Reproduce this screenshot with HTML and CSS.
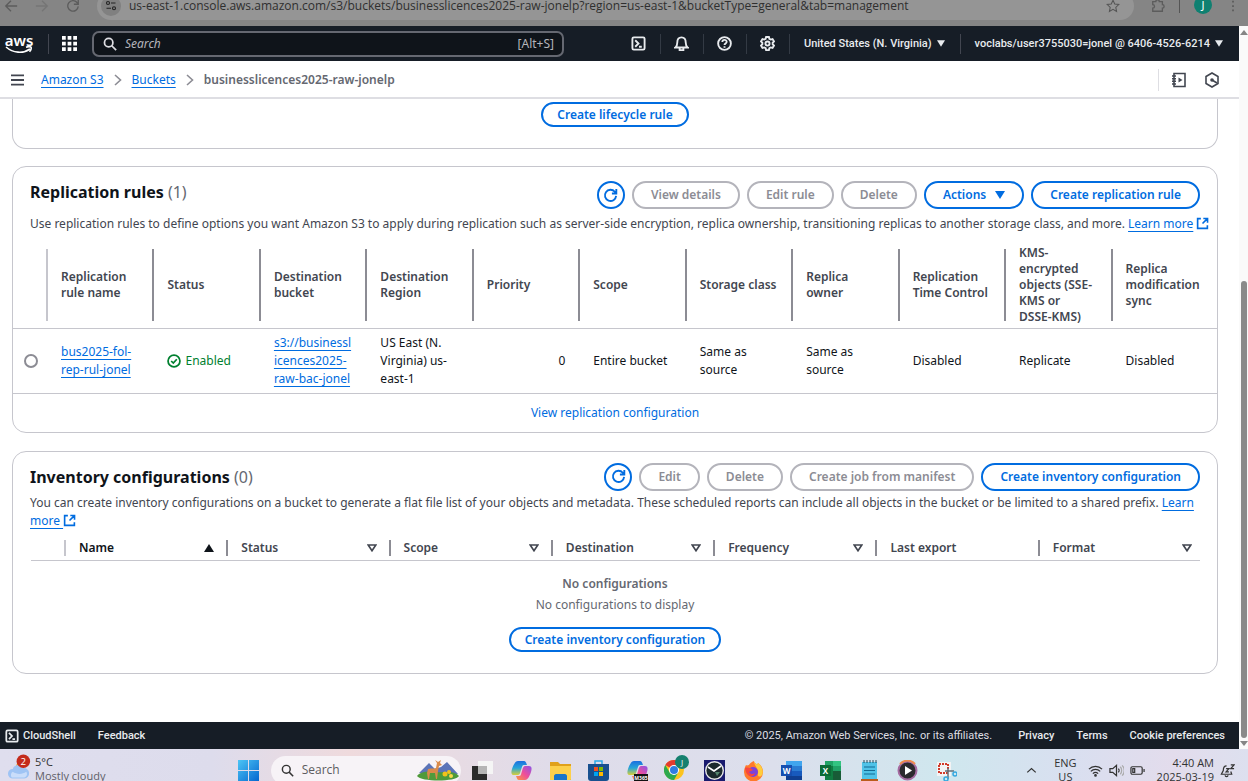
FILE: index.html
```html
<!DOCTYPE html>
<html lang="en">
<head>
<meta charset="utf-8">
<title>businesslicences2025-raw-jonelp - S3 bucket</title>
<link rel="stylesheet" href="styles.css">
</head>
<body>
<svg class="sprite" aria-hidden="true">
  <symbol id="i-shell" viewBox="0 0 16 16"><rect x="1.500" y="1.500" width="13" height="13" rx="1.500"/><path d="M4.500 4.500 8 8l-3.500 3.500M8.500 11.500h3"/></symbol>
  <symbol id="i-search" viewBox="0 0 16 16"><circle cx="6.500" cy="6.500" r="4.800"/><path d="m10 10 5 5"/></symbol>
  <symbol id="i-refresh" viewBox="0 0 16 16"><path d="M14 8.500A6 6 0 1 1 12.600 4L14 5.500M14.200 1v4.800H9.500"/></symbol>
  <symbol id="i-external" viewBox="0 0 16 16"><path d="M6 2H2v12h12v-4M9 1.800h5.200V7M14 2 8 8"/></symbol>
  <symbol id="i-down" viewBox="0 0 10 8"><path d="M0 0h10L5 8z"/></symbol>
  <symbol id="i-sort" viewBox="0 0 10 8"><path d="M1.200 1h7.600L5 6.800z"/></symbol>
  <symbol id="i-chev" viewBox="0 0 8 12"><path d="m1 1 5.500 5L1 11"/></symbol>
</svg>

<header class="browser">
  <button class="bbtn" aria-label="Back"><svg viewBox="0 0 16 16"><path d="M15 8H2m6-6L2 8l6 6"/></svg></button>
  <button class="bbtn dim" aria-label="Forward"><svg viewBox="0 0 16 16"><path d="M1 8h13M8 2l6 6-6 6"/></svg></button>
  <button class="bbtn" aria-label="Reload"><svg viewBox="0 0 16 16"><path d="M14 8.500A6 6 0 1 1 12.600 4L14 5.500M14 1v5H9"/></svg></button>
  <div class="omnibox">
    <span class="site"><svg viewBox="0 0 16 16"><circle cx="4" cy="4" r="2"/><path d="M8 4h6M2 11h6"/><circle cx="12" cy="11" r="2"/></svg></span>
    <span class="url">us-east-1.console.aws.amazon.com/s3/buckets/businesslicences2025-raw-jonelp?region=us-east-1&amp;bucketType=general&amp;tab=management</span>
    <svg class="star" viewBox="0 0 16 16"><path d="m8 1.500 2 4.300 4.600.5-3.400 3.200.9 4.700L8 11.800l-4.100 2.400.9-4.700L1.400 6.300 6 5.800z"/></svg>
  </div>
  <button class="bbtn ext" aria-label="Extensions"><svg viewBox="0 0 16 16"><path d="M2 3h3.500a2 2 0 0 1 4 0H13v3.500a2 2 0 0 1 0 4V14H2v-3.500a2 2 0 0 0 0-4z"/></svg></button>
  <span class="bsep"></span>
  <span class="avatar">J</span>
  <button class="bbtn dots" aria-label="Menu"><svg viewBox="0 0 16 16"><path d="M8 2v2M8 7v2M8 12v2"/></svg></button>
</header>

<div class="viewport">
  <div class="console">
    <nav class="topnav">
      <a class="logo" href="#" aria-label="aws"><b>aws</b><svg viewBox="0 0 28 8"><path d="M1 1c7 6 17 7 24 2"/><path d="M21 1.200c2-.7 4-.8 5 0 .5 1-.2 3-1.500 4.500"/></svg></a>
      <span class="tsep"></span>
      <button class="tbtn grid" aria-label="Services"><svg viewBox="0 0 16 16"><path d="M0 0h4v4H0zM6 0h4v4H6zM12 0h4v4h-4zM0 6h4v4H0zM6 6h4v4H6zM12 6h4v4h-4zM0 12h4v4H0zM6 12h4v4H6zM12 12h4v4h-4z"/></svg></button>
      <label class="search"><svg class="ln"><use href="#i-search"/></svg><input type="text" placeholder="Search" aria-label="Search"><span>[Alt+S]</span></label>
      <div class="tools">
        <button class="tbtn" aria-label="CloudShell"><svg class="ln"><use href="#i-shell"/></svg></button>
        <button class="tbtn" aria-label="Notifications"><svg class="ln" viewBox="0 0 16 16"><path d="M1.500 12.200c2-1.500 2-3 2-5.200 0-3.500 2-5.500 4.500-5.500s4.500 2 4.500 5.500c0 2.200 0 3.700 2 5.200zM6 13v2h4v-2"/></svg></button>
        <button class="tbtn" aria-label="Help"><svg class="ln" viewBox="0 0 16 16"><circle cx="8" cy="8" r="6.800"/><path d="M5.700 6.500C5.700 3.300 10.300 3.500 10.300 6.200 10.300 8 8 7.800 8 9.600M8 11v1.500"/></svg></button>
        <button class="tbtn" aria-label="Settings"><svg class="ln" viewBox="0 0 16 16"><circle cx="8" cy="8" r="2.200"/><path d="M6.500 1h3l.5 2 1.400.8 2-.6L15 5.800 13.500 7.200v1.600L15 10.200l-1.600 2.600-2-.6L10 13l-.5 2h-3L6 13l-1.400-.8-2 .6L1 10.200l1.500-1.400V7.200L1 5.800l1.600-2.600 2 .6L6 3z"/></svg></button>
        <button class="tmenu">United States (N. Virginia) <svg><use href="#i-down"/></svg></button>
        <button class="tmenu">voclabs/user3755030=jonel @ 6406-4526-6214 <svg><use href="#i-down"/></svg></button>
      </div>
    </nav>

    <nav class="crumbs">
      <button class="ibtn" aria-label="Open navigation"><svg viewBox="0 0 14 12"><path d="M0 1h14M0 6h14M0 11h14"/></svg></button>
      <a href="#">Amazon S3</a><svg class="chev"><use href="#i-chev"/></svg>
      <a href="#">Buckets</a><svg class="chev"><use href="#i-chev"/></svg>
      <b>businesslicences2025-raw-jonelp</b>
      <div class="panels">
        <button class="ibtn" aria-label="Tutorials"><svg viewBox="0 0 16 16"><path d="M3 1.500h11v13H3zM1 4h4M1 6.700h4M1 9.300h4M1 12h4"/><path class="fill" d="m7.500 5.500 4 2.500-4 2.500z"/></svg></button>
        <button class="ibtn" aria-label="Diagnostics"><svg viewBox="0 0 16 16"><path d="m8 1 6 3.500v7L8 15l-6-3.500v-7z"/><circle class="fill" cx="8" cy="8" r="1.800"/><path d="m8 8 5 3"/></svg></button>
      </div>
    </nav>

    <main>
      <section class="card lifecycle"><button class="btn small">Create lifecycle rule</button></section>

      <section class="card">
        <div class="head">
          <h2>Replication rules <span>(1)</span></h2>
          <div class="actions">
            <button class="btn round" aria-label="Refresh"><svg><use href="#i-refresh"/></svg></button>
            <button class="btn" disabled>View details</button>
            <button class="btn" disabled>Edit rule</button>
            <button class="btn" disabled>Delete</button>
            <button class="btn">Actions <svg><use href="#i-down"/></svg></button>
            <button class="btn">Create replication rule</button>
          </div>
        </div>
        <p class="desc line">Use replication rules to define options you want Amazon S3 to apply during replication such as server-side encryption, replica ownership, transitioning replicas to another storage class, and more. <a href="#">Learn more</a> <svg class="out"><use href="#i-external"/></svg></p>
        <table class="rules">
          <thead><tr>
            <th class="pick"></th><th>Replication rule name</th><th>Status</th><th>Destination bucket</th><th>Destination Region</th><th>Priority</th><th>Scope</th><th>Storage class</th><th>Replica<br>owner</th><th>Replication Time Control</th><th>KMS-<br>encrypted<br>objects (SSE-<br>KMS or<br>DSSE-KMS)</th><th>Replica modification sync</th>
          </tr></thead>
          <tbody><tr>
            <td class="pick"><input type="radio" name="rule" aria-label="Select bus2025-fol-rep-rul-jonel"></td>
            <td><a href="#">bus2025-fol-<br>rep-rul-jonel</a></td>
            <td class="ok"><svg viewBox="0 0 16 16"><circle cx="8" cy="8" r="6.800"/><path d="m4.800 8 2.400 2.400 4-4.400"/></svg>Enabled</td>
            <td><a href="#">s3://businessl<br>icences2025-<br>raw-bac-jonel</a></td>
            <td>US East (N.<br>Virginia) us-<br>east-1</td>
            <td class="num">0</td><td>Entire bucket</td><td>Same as<br>source</td><td>Same as<br>source</td><td>Disabled</td><td>Replicate</td><td>Disabled</td>
          </tr></tbody>
        </table>
        <div class="more"><a href="#">View replication configuration</a></div>
      </section>

      <section class="card inv">
        <div class="head">
          <h2>Inventory configurations <span>(0)</span></h2>
          <div class="actions">
            <button class="btn round" aria-label="Refresh"><svg><use href="#i-refresh"/></svg></button>
            <button class="btn" disabled>Edit</button>
            <button class="btn" disabled>Delete</button>
            <button class="btn" disabled>Create job from manifest</button>
            <button class="btn">Create inventory configuration</button>
          </div>
        </div>
        <p class="desc">You can create inventory configurations on a bucket to generate a flat file list of your objects and metadata. These scheduled reports can include all objects in the bucket or be limited to a shared prefix. <a href="#">Learn<br>more </a><svg class="out"><use href="#i-external"/></svg></p>
        <div class="inset">
        <table class="configs">
          <thead><tr>
            <th class="pick"></th>
            <th class="on"><div>Name<svg class="up" viewBox="0 0 10 8"><path d="M0 8h10L5 0z"/></svg></div></th>
            <th><div>Status<svg><use href="#i-sort"/></svg></div></th>
            <th><div>Scope<svg><use href="#i-sort"/></svg></div></th>
            <th><div>Destination<svg><use href="#i-sort"/></svg></div></th>
            <th><div>Frequency<svg><use href="#i-sort"/></svg></div></th>
            <th><div>Last export</div></th>
            <th><div>Format<svg><use href="#i-sort"/></svg></div></th>
          </tr></thead>
        </table>
        </div>
        <div class="empty"><b>No configurations</b><span>No configurations to display</span><button class="btn small">Create inventory configuration</button></div>
      </section>
    </main>

    <footer class="foot">
      <a class="cs" href="#"><svg class="ln"><use href="#i-shell"/></svg>CloudShell</a>
      <a href="#">Feedback</a>
      <span class="copy">© 2025, Amazon Web Services, Inc. or its affiliates.</span>
      <a href="#">Privacy</a><a href="#">Terms</a><a href="#">Cookie preferences</a>
    </footer>
  </div>
  <div class="scroll"><svg viewBox="0 0 10 6"><path d="m5 0 5 6H0z"/></svg><div class="track"><div class="thumb"></div></div><svg viewBox="0 0 10 6"><path d="m5 6 5-6H0z"/></svg></div>
</div>

<div class="taskbar">
  <div class="weather">
    <svg viewBox="0 0 26 28"><path d="M11 6c0 5 3 8 7 8-1 5-9 8-13 3 3 0 6-6 6-11z" fill="#f6a21d"/><path d="M6 26a5 5 0 0 1 0-10 6 6 0 0 1 11-1 5 5 0 0 1 1 11z" fill="#9fc4f4"/><path d="M5 25a4 4 0 0 1 1-6c4 3 10 3 14 0 2 3 0 6-3 6z" fill="#c9ddfa"/><circle cx="17" cy="8" r="7" fill="#c42b1c"/><text x="17" y="12" text-anchor="middle">2</text></svg>
    <div><span>5°C</span><span class="sub">Mostly cloudy</span></div>
  </div>
  <div class="apps">
    <svg class="app win" viewBox="0 0 21 21"><defs><linearGradient id="gw" x1="0" y1="0" x2="1" y2="1"><stop stop-color="#4cc5f5"/><stop offset="1" stop-color="#0667cf"/></linearGradient></defs><path fill="url(#gw)" d="M0 0h10v10H0zM11 0h10v10H11zM0 11h10v10H0zM11 11h10v10H11z"/></svg>
    <div class="tsearch"><svg class="ln"><use href="#i-search"/></svg><input type="text" placeholder="Search" aria-label="Search Windows">
      <svg class="deer" viewBox="0 0 42 22"><path d="M2 14 12 4l6 6 6-2 6-5 11 12z" fill="#5b74b8"/><path d="M0 17c4-5 12-5 20-4s16-2 22 4c-3 6-38 6-42 0z" fill="#4f9a3b"/><path d="M11 10c4-1 6 0 8-1l1-5-2-3 3 2 3-2-1 3 2 2-3 1-1 5-1 8h-1l-1-6h-5l-1 6h-1l-1-6z" fill="#d98a4a"/><circle cx="28" cy="15" r="2.500" fill="#f4c21c"/><circle cx="32" cy="13" r="2" fill="#f4c21c"/><circle cx="34" cy="17" r="2" fill="#f8d849"/></svg></div>
    <svg class="app" viewBox="0 0 21 21"><path d="M0 6h15v14H0z" fill="#2b2b2b"/><path d="M6 1h15v13H6z" fill="#f5f5f5"/><path d="M6 6h9v8H6z" fill="#b5b5b5"/></svg>
    <svg class="app" viewBox="0 0 21 21"><defs><linearGradient id="gc" x1="0" y1="0" x2="0" y2="1"><stop stop-color="#1b6fe0"/><stop offset=".5" stop-color="#27a5d8"/><stop offset="1" stop-color="#d8cf38"/></linearGradient><linearGradient id="gp" x1="1" y1="0" x2="0" y2="1"><stop stop-color="#8a55e8"/><stop offset=".5" stop-color="#ee4d9b"/><stop offset="1" stop-color="#fb9a3d"/></linearGradient></defs><path id="cop1" d="M7 1h6c2 0 2 2 3 4h-3c-2 0-2 2-3 5s-1 5-4 5H3c-3 0-3-3-2-6s3-8 6-8z" fill="url(#gc)"/><path id="cop2" d="M14 20H8c-2 0-2-2-3-4h3c2 0 2-2 3-5s1-5 4-5h3c3 0 3 3 2 6s-3 8-6 8z" fill="url(#gp)"/></svg>
    <svg class="app" viewBox="0 0 21 21"><path d="M0 2h8l2 2h11v16H0z" fill="#e0a11b"/><path d="M0 6h21v13a1 1 0 0 1-1 1H0z" fill="#fcd04b"/><path d="M4 20v-4c0-1 1-2 2-2h9c1 0 2 1 2 2v4z" fill="#1875c9"/></svg>
    <svg class="app" viewBox="0 0 21 21"><path d="M7 5V1h7v4" fill="none" stroke="#2ba8e8" stroke-width="1.500"/><path d="M0 4h21v14a3 3 0 0 1-3 3H3a3 3 0 0 1-3-3z" fill="#18508f"/><path fill="#f25022" d="M6 7h4v4H6z"/><path fill="#7fba00" d="M11 7h4v4h-4z"/><path fill="#00a4ef" d="M6 12h4v4H6z"/><path fill="#ffb900" d="M11 12h4v4h-4z"/></svg>
    <svg class="app" viewBox="0 0 21 21"><use href="#cop1"/><use href="#cop2"/><path d="M7 14h14v7H7z" fill="#111"/><text class="m" x="14" y="20" text-anchor="middle">M365</text></svg>
    <svg class="app chrome" viewBox="0 0 26 26"><circle cx="10" cy="15" r="10" fill="#fcc31e"/><path d="M10 15 1.300 10A10 10 0 0 1 18.700 10H10z" fill="#e33b2e"/><path d="M1.300 10A10 10 0 0 0 10 25l4.300-7.500L5.700 17.500z" fill="#2da94f"/><circle cx="10" cy="15" r="5" fill="#fff"/><circle cx="10" cy="15" r="4" fill="#2f7de1"/><circle cx="18" cy="7" r="7" fill="#15806f"/><text class="j" x="18" y="10" text-anchor="middle">J</text></svg>
    <svg class="app" viewBox="0 0 21 21"><path d="M0 0h21v21H0z" fill="#191b6e"/><circle cx="10.500" cy="10.500" r="8.800" fill="#1b2a2c" stroke="#e8e8e8" stroke-width="1.400"/><path d="m4 7 6 4 7-5" fill="none" stroke="#fff" stroke-width="1.600"/><path d="M11 12h5l-3 4z" fill="#53836c"/></svg>
    <svg class="app" viewBox="0 0 21 21"><path d="M3 5c1 1 2 0 3 0 1-2 3-3 5-4 0 2 2 2 3 4l1-2c3 2 5 5 5 9a9.500 9.500 0 0 1-19 0c0-3 1-5 2-7z" fill="#ff7a2b"/><path d="M11 1c0 2 2 2 3 4l1-2c4 3 6 8 4 12-2 3-5 1-4-2 1-4-4-7-4-12z" fill="#ffcd3c"/><circle cx="10" cy="12" r="5" fill="#7b43d9"/><path d="M2 8c3-1 6 0 8 2l-4 2c1 2 4 3 6 1-1 5-9 5-10-5z" fill="#f6463f"/></svg>
    <svg class="app" viewBox="0 0 21 21"><path d="M5 1h16v5H5z" fill="#41a5ee"/><path d="M5 6h16v5H5z" fill="#2b7cd3"/><path d="M5 11h16v5H5z" fill="#185abd"/><path d="M5 16h16v4H5z" fill="#103f91"/><path d="M0 5h11v11H0z" fill="#164fb0"/><text x="5.500" y="14" text-anchor="middle">W</text></svg>
    <svg class="app" viewBox="0 0 21 21"><path d="M5 1h8v5H5z" fill="#21a366"/><path d="M13 1h8v5h-8z" fill="#33c481"/><path d="M5 6h8v14H5z" fill="#107c41"/><path d="M13 6h8v5h-8z" fill="#21a366"/><path d="M13 11h8v9h-8z" fill="#185c37"/><path d="M0 5h11v11H0z" fill="#0b6b36"/><text x="5.500" y="14" text-anchor="middle">X</text></svg>
    <svg class="app" viewBox="0 0 21 21"><path d="M3 2h15v17H3z" fill="#4fc3e8"/><path d="M2 19h17v2H2z" fill="#bb5c1d"/><path d="M5 7h11M5 10.500h11M5 14h11" stroke="#136b93" stroke-width="1.200"/><path d="M5 0v3M8 0v3M11 0v3M14 0v3M17 0v3" stroke="#294c5c"/></svg>
    <svg class="app" viewBox="0 0 21 21"><circle cx="10.500" cy="10.500" r="9" fill="#2c2a2e" stroke="#a56ba1" stroke-width="2"/><path d="M3 4a10 10 0 0 1 15 0" fill="none" stroke="#ef8b4d" stroke-width="2"/><path d="m8 6 7 4.500L8 15z" fill="#fff"/></svg>
    <svg class="app" viewBox="0 0 21 21"><path d="M1 2h14v14H1z" fill="#f3f3f4"/><path d="M3 4h9v9H3z" fill="none" stroke="#d13a2a" stroke-width="2" stroke-dasharray="2 1"/><path d="M9 11h9M12 8v11" stroke="#66717a" stroke-width="1.500"/><circle cx="19" cy="14" r="2" fill="none" stroke="#35a8df" stroke-width="1.500"/><circle cx="10" cy="19" r="2" fill="none" stroke="#35a8df" stroke-width="1.500"/></svg>
  </div>
  <div class="tray">
    <svg viewBox="0 0 16 16"><path d="m3.500 10 4.500-4 4.500 4"/></svg>
    <span class="lang">ENG<br>US</span>
    <svg viewBox="0 0 16 16"><path d="M1 6.500a10 10 0 0 1 14 0M3 9a7 7 0 0 1 10 0M5.200 11.300a4 4 0 0 1 5.600 0"/><circle cx="8" cy="13.300" r=".8"/></svg>
    <svg viewBox="0 0 16 16"><path d="M1 6h3l4-3.500v11L4 10H1zM10 6c1 1 1 3 0 4"/><path class="faint" d="M12 4c2 2 2 6 0 8M14 2.500c3 3 3 8 0 11"/></svg>
    <svg viewBox="0 0 16 16"><rect x="1" y="4" width="12" height="8" rx="1.500"/><path d="M15 6.500v3M3 6h2v4H3z"/></svg>
    <span class="clock">4:40 AM<br>2025-03-19</span>
    <svg viewBox="0 0 16 16"><path d="M7 3C4 3 3.500 5 3.500 8l-2 4h11l-1-3M5.500 13c0 2 3 2 3 0M6.500 6h3L6.500 9.500h3M11.500 2H15l-3.500 4H15"/></svg>
  </div>
</div>
</body>
</html>
```
FILE: styles.css
```css
* { box-sizing: border-box; }

body {
  margin: 0;
  height: 100vh;
  overflow: hidden;
  display: flex;
  flex-direction: column;
  background: #fff;
  color: #0f141a;
  font: 12px/18px "Noto Sans", "Open Sans", sans-serif;
}

button, input { font: inherit; color: inherit; }
button { padding: 0; border: 0; background: none; }
svg { fill: none; flex: none; }
.sprite { display: none; }
.ln { stroke: currentColor; stroke-width: 2; }

/* Browser toolbar */
.browser {
  flex: none;
  height: 26px;
  display: flex;
  align-items: flex-end;
  padding: 0 8px 6px 4px;
  overflow: hidden;
  background: #858585;
  color: #2f2f2f;
}
.bbtn { height: 28px; width: 14px; margin-right: 17px; display: flex; align-items: center; }
.bbtn svg { width: 14px; height: 14px; stroke: #5c5c5c; stroke-width: 1.5; }
.bbtn.dim svg { stroke: #757575; }
.omnibox {
  flex: 1;
  height: 28px;
  display: flex;
  align-items: center;
  gap: 8px;
  margin-right: 17px;
  padding: 0 14px 0 4px;
  border-radius: 14px;
  background: #959595;
}
.site { width: 20px; height: 20px; border-radius: 10px; background: #808080; display: flex; align-items: center; justify-content: center; }
.site svg { width: 12px; height: 12px; stroke: #222; stroke-width: 1.5; }
.url { flex: 1; white-space: nowrap; font-family: "Open Sans", sans-serif; line-height: 16px; }
.star { width: 14px; height: 14px; stroke: #555; stroke-width: 1.2; }
.bbtn.ext { margin-right: 14px; }
.bsep { width: 1px; height: 14px; margin: 0 14px 7px 0; background: #555; }
.avatar { width: 18px; height: 18px; margin-bottom: 6px; border-radius: 9px; background: #0f8071; color: #fff; text-align: center; font-size: 11px; }
.bbtn.dots { margin: 0 0 0 14px; }
.bbtn.dots svg { stroke-width: 2; }

.viewport { flex: 1; min-height: 0; display: flex; }
.console { flex: 1; min-width: 0; display: flex; flex-direction: column; }

/* Console navigation */
.topnav {
  height: 35px;
  flex: none;
  display: flex;
  align-items: center;
  padding: 0 16px 0 5px;
  background: #161d26;
  color: #e8ebee;
}
.logo { display: flex; flex-direction: column; align-items: center; width: 28px; color: #fff; text-decoration: none; }
.logo b { font-size: 15px; line-height: 12px; font-weight: 600; }
.logo svg { width: 28px; height: 8px; stroke: #fff; stroke-width: 1.6; }
.tsep { width: 1px; height: 20px; margin: 0 13px 0 15px; background: #424650; }
.tbtn { display: flex; align-items: center; justify-content: center; }
.tbtn svg { width: 15px; height: 15px; }
.grid svg { width: 15px; fill: #fff; }
.search {
  flex: 0 1 472px;
  height: 26px;
  display: flex;
  align-items: center;
  gap: 8px;
  margin-left: 15px;
  padding: 0 8px 0 9px;
  border: 2px solid #656871;
  border-radius: 7px;
  background: #0f141a;
}
.search svg { width: 14px; height: 14px; color: #dedee3; }
.search input { flex: 1; min-width: 0; padding: 0; border: 0; outline: 0; background: none; }
.search input::placeholder { color: #b4b4bb; font-style: italic; opacity: 1; }
.search span { color: #b4b4bb; }
.tools { margin-left: auto; display: flex; align-items: center; }
.tools .tbtn { width: 43px; height: 20px; border-right: 1px solid #333a44; }
.tmenu { display: flex; align-items: center; gap: 5px; height: 20px; padding: 0 15px 0 14px; font-family: Roboto, sans-serif; font-size: 11px; font-weight: 500; white-space: nowrap; }
.tmenu:last-child { padding-right: 0; border-left: 1px solid #424650; }
.tmenu svg { width: 8px; height: 7px; fill: currentColor; }

/* Breadcrumbs */
.crumbs {
  flex: none;
  height: 38px;
  display: flex;
  align-items: center;
  gap: 10px;
  padding: 1px 19px 0 11px;
  border-bottom: 2px solid #dedee3;
  color: #656871;
}
.crumbs > .ibtn { margin-right: 7px; }
.ibtn { display: flex; }
.ibtn svg { width: 16px; height: 16px; stroke: #424650; stroke-width: 1.6; }
.crumbs > .ibtn svg { width: 13px; height: 12px; stroke-width: 2; }
.ibtn .fill { fill: #424650; stroke: none; }
.chev { width: 8px; height: 12px; stroke: #8c8c94; stroke-width: 1.6; }
.crumbs b { font-weight: 600; }
.panels { margin-left: auto; height: 22px; padding-left: 12px; border-left: 1px solid #dedee3; display: flex; align-items: center; gap: 17px; }

a { color: #006ce0; text-decoration: none; }
.crumbs a, .desc a, td a { text-decoration: underline; text-decoration-thickness: 1px; text-underline-offset: 3px; }

/* Cards */
main { flex: 1; min-height: 0; overflow: hidden; padding: 0 21px 0 12px; }
.card { margin-bottom: 18px; border: 1px solid #c6c6cd; border-radius: 14px; }
.lifecycle { display: flex; justify-content: center; padding: 3px 0 21px; margin-bottom: 17px; border-top: 0; border-radius: 0 0 14px 14px; }
.head { display: flex; justify-content: space-between; padding: 14px 17px 0; }
.inv .head { align-items: center; padding-top: 11px; }
h2 { margin: 0; font-size: 16px; line-height: 22px; font-weight: 700; white-space: nowrap; }
h2 span { font-weight: 400; color: #656871; }
.actions { display: flex; gap: 7px; }
.btn {
  height: 28px;
  padding: 0 17px;
  display: flex;
  align-items: center;
  gap: 9px;
  border: 2px solid #006ce0;
  border-radius: 14px;
  color: #006ce0;
  font-weight: 600;
  white-space: nowrap;
}
.btn svg { width: 10px; height: 8px; fill: currentColor; }
.btn:disabled { border-color: #b4b4bb; color: #8c8c94; }
.btn.round { width: 28px; padding: 0; justify-content: center; }
.btn.round svg { width: 15px; height: 15px; fill: none; stroke: currentColor; stroke-width: 2; }
.btn.small { height: 25px; padding: 0 14px; }
.desc { margin: 6px 17px 0; color: #424650; }
.desc.line { margin-right: 0; white-space: nowrap; }
.inv .desc { margin-top: 3px; }
.out { width: 13px; height: 13px; vertical-align: -2px; stroke: #006ce0; stroke-width: 2; }

/* Tables */
table { width: 100%; table-layout: fixed; border-collapse: collapse; }
.pick { width: 33px; }
th {
  padding: 0 6px 0 15px;
  text-align: left;
  font-weight: 600;
  line-height: 16px;
  color: #424650;
  background: linear-gradient(#8c8c94, #8c8c94) no-repeat left center / 2px 72px;
}
th.pick { background: none; }
th.pick + th { background-image: linear-gradient(#c6c6cd, #c6c6cd); }
.rules { margin-top: 9px; }
.rules thead tr { height: 86px; border-bottom: 1px solid #c6c6cd; }
.rules th { padding-bottom: 0; }
td { height: 65px; padding: 0 6px 0 15px; }
td.pick { padding: 0 11px; }
tbody tr { border-bottom: 1px solid #c6c6cd; }
input[type="radio"] { appearance: none; display: block; width: 14px; height: 14px; margin: 0; border: 2px solid #8c8c94; border-radius: 7px; }
.ok { color: #00802f; }
.ok svg { width: 14px; height: 14px; margin-right: 4px; vertical-align: -3px; stroke: currentColor; stroke-width: 2; }
.num { text-align: right; padding-right: 13px; }
.more { padding: 10px 0; text-align: center; }

.inset { padding: 6px 17px 0 18px; }
.configs thead tr { height: 25px; border-bottom: 1px solid #c6c6cd; }
.configs th { background-size: 2px 16px; }
.configs th div { display: flex; justify-content: space-between; align-items: center; padding-right: 6px; }
.configs th:last-child div { padding-right: 2px; }
.configs svg { width: 10px; height: 8px; stroke: #424650; stroke-width: 1.6; }
.configs .up { fill: #0f141a; stroke: none; }
.configs .on { color: #0f141a; }
.empty { display: flex; flex-direction: column; align-items: center; gap: 3px; padding: 14px 0 21px; color: #656871; }
.empty b { font-weight: 600; color: #656871; }
.empty .btn { margin-top: 10px; }

/* Console footer */
.foot { flex: none; height: 27px; display: flex; align-items: center; gap: 22px; padding: 0 14px 0 5px; background: #161d26; color: #dedee3; font-family: Roboto, sans-serif; font-size: 11px; white-space: nowrap; }
.foot a { color: #e8ebee; font-weight: 500; }
.cs { display: flex; align-items: center; gap: 4px; }
.cs svg { width: 14px; height: 14px; }
.copy { margin-left: auto; margin-right: 4px; }

.scroll { width: 9px; display: flex; flex-direction: column; align-items: center; padding: 4px 0 3px; background: #fafafa; }
.scroll svg { width: 8px; height: 5px; fill: #858585; }
.track { flex: 1; width: 6px; display: flex; flex-direction: column; justify-content: flex-end; padding-bottom: 3px; }
.thumb { height: 65%; border-radius: 3px; background: #8a8a8a; }

/* Taskbar */
.taskbar {
  flex: none;
  height: 32px;
  overflow: hidden;
  display: flex;
  align-items: flex-start;
  padding: 0 13px 0 7px;
  background: linear-gradient(90deg, #dfdeee 0%, #dddcec 17%, #efdadd 28%, #dfdcea 45%, #dcdfec 62%, #cfe7ee 76%, #d9dff0 86%, #e3dcec 94%, #dde0ef 100%);
  color: #333;
  font: 11px/14px "Open Sans", sans-serif;
}
.weather { display: flex; gap: 3px; flex: 0 0 231px; }
.weather svg { width: 25px; height: 28px; margin-top: 4px; }
.weather text { fill: #fff; font-size: 10px; }
.weather div { display: flex; flex-direction: column; padding-top: 6px; }
.sub { color: #5f5f68; }
.apps { flex: 0 1 719px; display: flex; align-items: center; justify-content: space-between; height: 42px; }
.app { width: 21px; height: 21px; }
.app text { font-size: 8px; font-weight: 700; fill: #fff; }
.app text.m { font-size: 5px; }
.app text.j { font-size: 8px; font-weight: 400; }
.win { margin-right: -6px; }
.chrome { width: 26px; height: 26px; margin: 0 -4px 4px -1px; }
.tsearch { width: 190px; height: 29px; display: flex; align-items: center; gap: 8px; margin-right: -6px; padding: 0 2px 0 10px; border-radius: 15px; background: #f7f3f7; font-size: 12px; }
.tsearch .ln { width: 13px; height: 13px; stroke-width: 1.8; }
.tsearch input { flex: 1; min-width: 0; padding: 0; border: 0; outline: 0; background: none; }
.tsearch input::placeholder { color: #5c5c60; opacity: 1; }
.deer { width: 42px; height: 22px; }
.tray { flex: 1; display: flex; justify-content: flex-end; align-items: center; height: 42px; gap: 6px; }
.tray svg { width: 15px; height: 15px; stroke: #333; stroke-width: 1.3; }
.tray .faint { stroke: #aaa; }
.lang { margin: 0 5px 0 9px; text-align: center; }
.clock { text-align: right; margin-left: 6px; }
```
